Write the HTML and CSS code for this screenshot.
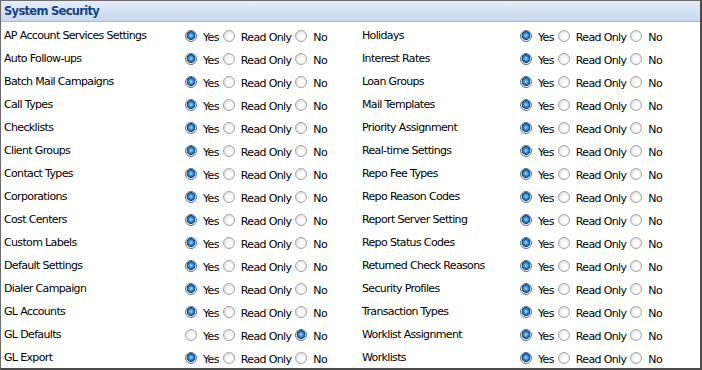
FILE: index.html
```html
<!DOCTYPE html>
<html lang="en">
<head>
    <meta charset="UTF-8">
    <title>System Security</title>
    <link rel="stylesheet" href="styles.css">
</head>
<body>
    <div class="panel">
        <div class="panel-header">System Security</div>
        <div class="panel-body">
            <!-- left column -->
            <div class="col col-left">
                <div class="row"><span class="name">AP Account Services Settings</span><span class="opts"><input type="radio" name="l1" checked><label>Yes</label><input type="radio" name="l1"><label>Read Only</label><input type="radio" name="l1"><label>No</label></span></div>
                <div class="row"><span class="name">Auto Follow-ups</span><span class="opts"><input type="radio" name="l2" checked><label>Yes</label><input type="radio" name="l2"><label>Read Only</label><input type="radio" name="l2"><label>No</label></span></div>
                <div class="row"><span class="name">Batch Mail Campaigns</span><span class="opts"><input type="radio" name="l3" checked><label>Yes</label><input type="radio" name="l3"><label>Read Only</label><input type="radio" name="l3"><label>No</label></span></div>
                <div class="row"><span class="name">Call Types</span><span class="opts"><input type="radio" name="l4" checked><label>Yes</label><input type="radio" name="l4"><label>Read Only</label><input type="radio" name="l4"><label>No</label></span></div>
                <div class="row"><span class="name">Checklists</span><span class="opts"><input type="radio" name="l5" checked><label>Yes</label><input type="radio" name="l5"><label>Read Only</label><input type="radio" name="l5"><label>No</label></span></div>
                <div class="row"><span class="name">Client Groups</span><span class="opts"><input type="radio" name="l6" checked><label>Yes</label><input type="radio" name="l6"><label>Read Only</label><input type="radio" name="l6"><label>No</label></span></div>
                <div class="row"><span class="name">Contact Types</span><span class="opts"><input type="radio" name="l7" checked><label>Yes</label><input type="radio" name="l7"><label>Read Only</label><input type="radio" name="l7"><label>No</label></span></div>
                <div class="row"><span class="name">Corporations</span><span class="opts"><input type="radio" name="l8" checked><label>Yes</label><input type="radio" name="l8"><label>Read Only</label><input type="radio" name="l8"><label>No</label></span></div>
                <div class="row"><span class="name">Cost Centers</span><span class="opts"><input type="radio" name="l9" checked><label>Yes</label><input type="radio" name="l9"><label>Read Only</label><input type="radio" name="l9"><label>No</label></span></div>
                <div class="row"><span class="name">Custom Labels</span><span class="opts"><input type="radio" name="l10" checked><label>Yes</label><input type="radio" name="l10"><label>Read Only</label><input type="radio" name="l10"><label>No</label></span></div>
                <div class="row"><span class="name">Default Settings</span><span class="opts"><input type="radio" name="l11" checked><label>Yes</label><input type="radio" name="l11"><label>Read Only</label><input type="radio" name="l11"><label>No</label></span></div>
                <div class="row"><span class="name">Dialer Campaign</span><span class="opts"><input type="radio" name="l12" checked><label>Yes</label><input type="radio" name="l12"><label>Read Only</label><input type="radio" name="l12"><label>No</label></span></div>
                <div class="row"><span class="name">GL Accounts</span><span class="opts"><input type="radio" name="l13" checked><label>Yes</label><input type="radio" name="l13"><label>Read Only</label><input type="radio" name="l13"><label>No</label></span></div>
                <div class="row"><span class="name">GL Defaults</span><span class="opts"><input type="radio" name="l14"><label>Yes</label><input type="radio" name="l14"><label>Read Only</label><input type="radio" name="l14" checked><label>No</label></span></div>
                <div class="row"><span class="name">GL Export</span><span class="opts"><input type="radio" name="l15" checked><label>Yes</label><input type="radio" name="l15"><label>Read Only</label><input type="radio" name="l15"><label>No</label></span></div>
            </div>
            <!-- right column -->
            <div class="col col-right">
                <div class="row"><span class="name">Holidays</span><span class="opts"><input type="radio" name="r1" checked><label>Yes</label><input type="radio" name="r1"><label>Read Only</label><input type="radio" name="r1"><label>No</label></span></div>
                <div class="row"><span class="name">Interest Rates</span><span class="opts"><input type="radio" name="r2" checked><label>Yes</label><input type="radio" name="r2"><label>Read Only</label><input type="radio" name="r2"><label>No</label></span></div>
                <div class="row"><span class="name">Loan Groups</span><span class="opts"><input type="radio" name="r3" checked><label>Yes</label><input type="radio" name="r3"><label>Read Only</label><input type="radio" name="r3"><label>No</label></span></div>
                <div class="row"><span class="name">Mail Templates</span><span class="opts"><input type="radio" name="r4" checked><label>Yes</label><input type="radio" name="r4"><label>Read Only</label><input type="radio" name="r4"><label>No</label></span></div>
                <div class="row"><span class="name">Priority Assignment</span><span class="opts"><input type="radio" name="r5" checked><label>Yes</label><input type="radio" name="r5"><label>Read Only</label><input type="radio" name="r5"><label>No</label></span></div>
                <div class="row"><span class="name">Real-time Settings</span><span class="opts"><input type="radio" name="r6" checked><label>Yes</label><input type="radio" name="r6"><label>Read Only</label><input type="radio" name="r6"><label>No</label></span></div>
                <div class="row"><span class="name">Repo Fee Types</span><span class="opts"><input type="radio" name="r7" checked><label>Yes</label><input type="radio" name="r7"><label>Read Only</label><input type="radio" name="r7"><label>No</label></span></div>
                <div class="row"><span class="name">Repo Reason Codes</span><span class="opts"><input type="radio" name="r8" checked><label>Yes</label><input type="radio" name="r8"><label>Read Only</label><input type="radio" name="r8"><label>No</label></span></div>
                <div class="row"><span class="name">Report Server Setting</span><span class="opts"><input type="radio" name="r9" checked><label>Yes</label><input type="radio" name="r9"><label>Read Only</label><input type="radio" name="r9"><label>No</label></span></div>
                <div class="row"><span class="name">Repo Status Codes</span><span class="opts"><input type="radio" name="r10" checked><label>Yes</label><input type="radio" name="r10"><label>Read Only</label><input type="radio" name="r10"><label>No</label></span></div>
                <div class="row"><span class="name">Returned Check Reasons</span><span class="opts"><input type="radio" name="r11" checked><label>Yes</label><input type="radio" name="r11"><label>Read Only</label><input type="radio" name="r11"><label>No</label></span></div>
                <div class="row"><span class="name">Security Profiles</span><span class="opts"><input type="radio" name="r12" checked><label>Yes</label><input type="radio" name="r12"><label>Read Only</label><input type="radio" name="r12"><label>No</label></span></div>
                <div class="row"><span class="name">Transaction Types</span><span class="opts"><input type="radio" name="r13" checked><label>Yes</label><input type="radio" name="r13"><label>Read Only</label><input type="radio" name="r13"><label>No</label></span></div>
                <div class="row"><span class="name">Worklist Assignment</span><span class="opts"><input type="radio" name="r14" checked><label>Yes</label><input type="radio" name="r14"><label>Read Only</label><input type="radio" name="r14"><label>No</label></span></div>
                <div class="row"><span class="name">Worklists</span><span class="opts"><input type="radio" name="r15" checked><label>Yes</label><input type="radio" name="r15"><label>Read Only</label><input type="radio" name="r15"><label>No</label></span></div>
            </div>
        </div>
    </div>
</body>
</html>
```

FILE: styles.css
```css
html, body {
    margin: 0;
    padding: 0;
    background: #fff;
}
body {
    font-family: "DejaVu Sans", Verdana, sans-serif;
    font-size: 11px;
    color: #000;
}
.panel {
    width: 702px;
    height: 370px;
    box-sizing: border-box;
    border: 1px solid #6b6b6b;
    border-right: 2px solid #4a4a4a;
    border-bottom: 2px solid #4a4a4a;
    overflow: hidden;
}
.panel-header {
    height: 20px;
    line-height: 21px;
    padding-left: 3px;
    font-weight: bold;
    font-size: 11.5px;
    letter-spacing: -0.7px;
    color: #15428b;
    background: linear-gradient(#e4ecf7, #c8d9f0);
    border-bottom: 1px solid #99bbe8;
}
.panel-body {
    display: grid;
    grid-template-columns: 358px 1fr;
    padding: 2px 0 0 3px;
    letter-spacing: -0.65px;
}
.row {
    display: flex;
    align-items: center;
    height: 23px;
}
.name {
    flex: none;
}
.col-left .name {
    width: 181px;
}
.col-right .name {
    width: 158px;
}
.opts {
    display: flex;
    align-items: center;
}
.opts label {
    margin: 3px 4px 0 6px;
}
/* radios drawn by hand, close to the old XP look */
input[type=radio] {
    appearance: none;
    -webkit-appearance: none;
    width: 12px;
    height: 12px;
    margin: 0;
    border: 1px solid #a4a4a4;
    border-radius: 50%;
    box-sizing: border-box;
    background: radial-gradient(circle at 60% 60%, #ffffff 20%, #e2e2e2 80%);
}
input[type=radio]:checked {
    border-color: #5a6f86;
    background: radial-gradient(circle at 50% 45%, #9ed6ff 0, #1e77c6 40%, #0d3e6e 55%, #e8e8e8 62%, #ffffff 90%);
}
```
